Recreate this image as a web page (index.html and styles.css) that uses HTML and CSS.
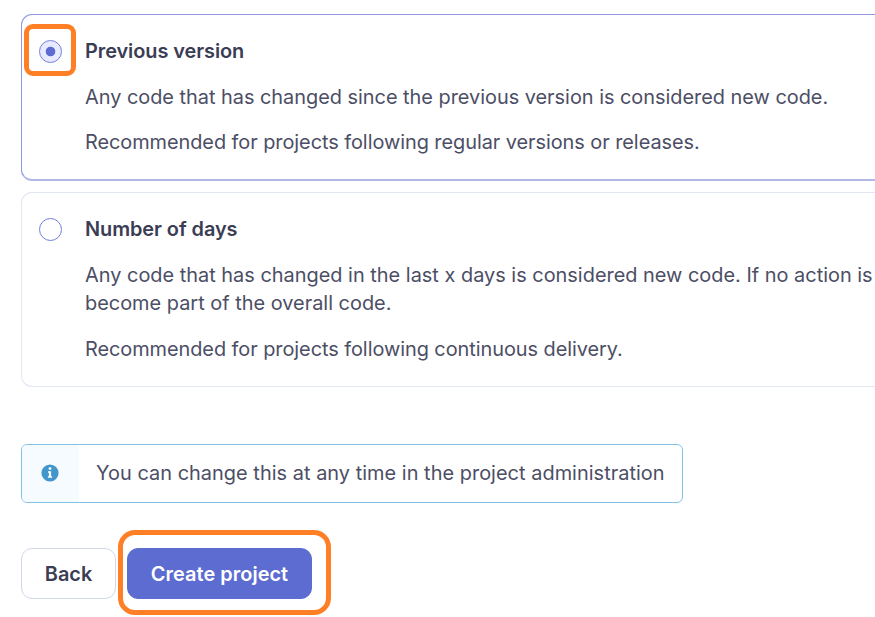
FILE: index.html
```html
<!DOCTYPE html>
<html lang="en">
<head>
<meta charset="utf-8">
<title>New code definition</title>
<link rel="stylesheet" href="styles.css">
</head>
<body>
<main class="page">
  <section class="option option-selected">
    <span class="radio-slot"><span class="radio radio-checked"></span><span class="mark mark-radio"></span></span>
    <div class="option-body">
      <h2>Previous version</h2>
      <p class="text-snug">Any code that has changed since the previous version is considered new code.</p>
      <p class="text-tight">Recommended for projects following regular versions or releases.</p>
    </div>
  </section>
  <section class="option">
    <span class="radio-slot"><span class="radio"></span></span>
    <div class="option-body">
      <h2>Number of days</h2>
      <p class="text-wide">Any code that has changed in the last x days is considered new code. If no action is<br>become part of the overall code.</p>
      <p class="text-tight">Recommended for projects following continuous delivery.</p>
    </div>
  </section>
  <div class="notice">
    <div class="notice-icon">
      <svg width="18" height="18" viewBox="0 0 18 18"><circle cx="9" cy="9" r="8.6" fill="#4296cb"/><circle cx="9" cy="4.6" r="1.4" fill="#fff"/><path d="M7 7.3h3.1v5h1v1.5H6.9v-1.5h1V8.8H7z" fill="#fff"/></svg>
    </div>
    <div class="notice-text">You can change this at any time in the project administration</div>
  </div>
  <div class="actions">
    <button class="btn">Back</button>
    <span class="btn-wrap"><button class="btn btn-primary">Create project</button><span class="mark mark-button"></span></span>
  </div>
</main>
</body>
</html>
```
FILE: styles.css
```css
* { box-sizing: border-box; }
body {
  margin: 0;
  background: #fff;
  color: #4c4e65;
  font: 400 19.9px/28.5px Inter, "Liberation Sans", sans-serif;
}
.page { height: 617px; padding: 14px 0 0 21px; }
.option {
  display: flex;
  height: 195px;
  padding: 22px 0 0 17px;
  border: 1px solid #e1e6f3;
  border-right: 0;
  border-radius: 11px 0 0 11px;
}
.option-selected {
  height: 167px;
  margin-bottom: 11px;
  border-color: #8f98e0;
  border-bottom: 2px solid #b0b7e9;
}
.radio-slot { position: relative; width: 46px; height: 30px; flex: none; }
.radio {
  display: block;
  width: 23px;
  height: 23px;
  margin-top: 3px;
  border: 1px solid #7380dc;
  border-radius: 50%;
}
.radio-checked { background: radial-gradient(circle, #5d6cd0 4.4px, #e8ebff 5.2px); }
.mark { position: absolute; border: 5px solid #ff7f27; pointer-events: none; }
.mark-radio { left: -15px; top: -13px; width: 52px; height: 52px; border-radius: 9px; }
.option-body { white-space: nowrap; }
h2 { margin: 0 0 17px; font-size: 19.9px; line-height: 28.5px; font-weight: 600; letter-spacing: -0.06px; color: #3b3d55; }
p { margin: 0 0 17px; }
.text-snug { letter-spacing: -0.01px; }
.text-tight { letter-spacing: -0.045px; }
.text-wide { letter-spacing: 0.012px; }
.notice {
  display: flex;
  width: 662px;
  height: 59px;
  margin-top: 57px;
  border: 1px solid #81c3e7;
  border-radius: 6px;
  overflow: hidden;
}
.notice-icon { display: flex; align-items: center; justify-content: center; width: 57px; padding: 0 1px 1px 0; background: #f5fbff; }
.notice-text { padding: 14px 0 0 17px; white-space: nowrap; letter-spacing: 0.04px; }
.actions { display: flex; gap: 11px; margin-top: 45px; }
.btn {
  width: 95px;
  height: 51px;
  padding: 0;
  border: 1px solid #d2d8ea;
  border-radius: 11px;
  background: #fff;
  color: #3b3d55;
  font: 600 19.9px/28px Inter, "Liberation Sans", sans-serif;
}
.btn-primary { width: 185px; border-color: #5d6cd0; background: #5d6cd0; color: #fff; letter-spacing: 0.05px; }
.btn-wrap { position: relative; display: flex; }
.mark-button { left: -9px; top: -18px; width: 213px; height: 85px; border-radius: 17px; }
```
